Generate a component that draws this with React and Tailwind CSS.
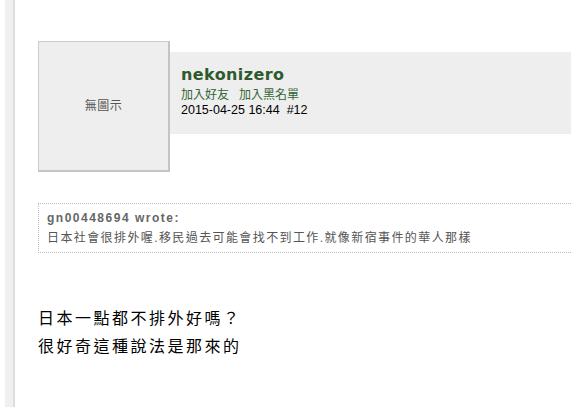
import React from "react";

const cjk = { fontFamily: '"Liberation Sans", "Noto Sans CJK TC", sans-serif' };

const App = () => {
  return (
    <div className="flex min-h-[407px] bg-white overflow-hidden" style={cjk}>
      {/* left rail */}
      <div className="w-[5px] shrink-0" />
      <div className="w-[10px] shrink-0 bg-[#f0f0f0] border-r-2 border-[#dddddd]" />

      <div className="flex-1 min-w-0 pl-[23px] pt-[41px]">
        {/* post header */}
        <div className="flex items-start">
          <div className="w-[132px] h-[131px] shrink-0 flex items-center justify-center bg-[#eeeeee] border border-[#cccccc] border-r-2 border-b-2 border-r-[#c4c4c4] border-b-[#c4c4c4] text-[12px] tracking-[0.5px] text-[#555555]">
            無圖示
          </div>
          <div className="flex-1 mt-[11px] h-[82px] bg-[#eeeeee] pl-[11px] pt-[13px]">
            <div
              className="text-[16px] font-bold leading-[20px] tracking-[0.4px] text-[#2d5a2d]"
              style={{ fontFamily: '"DejaVu Sans", Verdana, sans-serif' }}
            >
              nekonizero
            </div>
            <div className="mt-[3px] flex gap-[10px] text-[12px] leading-[15px] text-[#336633]">
              <span>加入好友</span>
              <span>加入黑名單</span>
            </div>
            <div className="text-[12.5px] leading-[14px] text-black whitespace-pre">
              2015-04-25 16:44  #12
            </div>
          </div>
        </div>

        {/* quote */}
        <div className="mt-[31px] -mr-[12px] border border-dotted border-[#bbbbbb] px-[8px] pt-[6px] pb-[5px]">
          <div className="text-[12px] font-bold leading-[16px] tracking-[1.5px] text-[#666666]">
            gn00448694 wrote:
          </div>
          <div className="mt-[3px] text-[12px] leading-[18px] tracking-[1.4px] text-[#555555] whitespace-nowrap">
            日本社會很排外喔.移民過去可能會找不到工作.就像新宿事件的華人那樣
          </div>
        </div>

        {/* body */}
        <div className="mt-[52px] text-[16px] leading-[28px] tracking-[2.5px] text-black">
          <div>日本一點都不排外好嗎？</div>
          <div>很好奇這種說法是那來的</div>
        </div>
      </div>
    </div>
  );
};

export default App;
